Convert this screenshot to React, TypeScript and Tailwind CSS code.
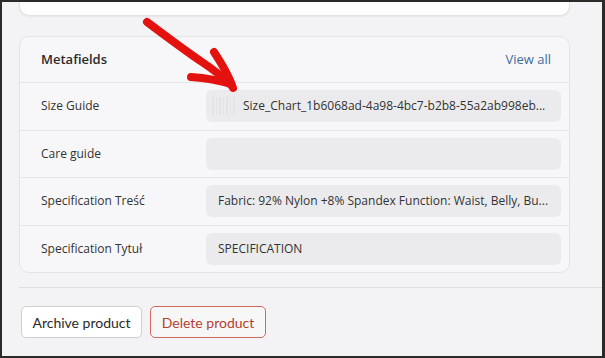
const rows = [
  { label: 'Size Guide', value: 'Size_Chart_1b6068ad-4a98-4bc7-b2b8-55a2ab998eb...', thumb: true },
  { label: 'Care guide', value: '' },
  { label: 'Specification Treść', value: 'Fabric: 92% Nylon +8% Spandex Function: Waist, Belly, Bu...' },
  { label: 'Specification Tytuł', value: 'SPECIFICATION' },
]

function Thumb() {
  return (
    <div className="mr-[7px] ml-[-6px] flex h-[18px] w-[24px] gap-[2px] opacity-50">
      {[0, 1, 2, 3, 4, 5, 6].map((i) => (
        <div key={i} className="h-full w-[1.5px] bg-[#dcdcde]" />
      ))}
    </div>
  )
}

export default function App() {
  return (
    <div className="relative h-[358px] w-[605px] overflow-hidden border-t-2 border-r-[3px] border-b-2 border-l-2 border-[#2a2a2a] bg-[#f3f3f5] font-['Open_Sans',sans-serif] text-[#303030]">
      <div className="pl-[17px]">
        <div className="mr-[32px] h-[14px] rounded-b-[10px] border border-t-0 border-[#e3e3e6] bg-white shadow-[0_1px_2px_rgba(0,0,0,0.06)]" />

        <div className="mt-[20px] mr-[32px] rounded-[10px] border border-[#e4e4e7] bg-[#f7f7f9]">
          <div className="flex h-[45px] items-center justify-between pr-[18px] pl-[21px]">
            <span className="text-[13px] font-semibold text-[#2b2b2b]">Metafields</span>
            <span className="text-[13px] text-[#3f6a9c]">View all</span>
          </div>
          {rows.map((r) => (
            <div key={r.label} className="flex h-[47.5px] items-center border-t border-[#e6e6e9]">
              <div className="w-[186px] pl-[21px] text-[12px] text-[#333]">{r.label}</div>
              <div className="mr-[8px] flex h-[32px] flex-1 items-center rounded-[6px] bg-[#ebebed] pl-[12px] text-[12px] text-[#333]">
                {r.thumb && <Thumb />}
                <span className="truncate">{r.value}</span>
              </div>
            </div>
          ))}
        </div>

        <div className="mt-[14px] h-px bg-[#e0e0e3]" />

        <div className="mt-[18px] ml-[2px] flex gap-[8px] font-['Lato',sans-serif] text-[14px]">
          <button className="h-[32px] w-[121px] rounded-[5px] border border-[#cfcfd2] bg-white text-[#2a2a2a]">
            Archive product
          </button>
          <button className="h-[32px] w-[116px] rounded-[5px] border border-[#d26a5b] bg-[#f7f7f8] text-[#b4402f]">
            Delete product
          </button>
        </div>
      </div>

      <svg className="pointer-events-none absolute top-0 left-0" width="605" height="358" viewBox="0 0 605 358">
        <g fill="none" stroke="#e3120f" strokeWidth="8" strokeLinecap="round" strokeLinejoin="round">
          <path d="M145 20 C 165 35, 185 50, 200 60 S 222 76, 230 84" />
          <path d="M212 50 C 220 62, 227 74, 231 86" />
          <path d="M189 75 C 202 76, 216 78, 229 82" />
        </g>
      </svg>
    </div>
  )
}
